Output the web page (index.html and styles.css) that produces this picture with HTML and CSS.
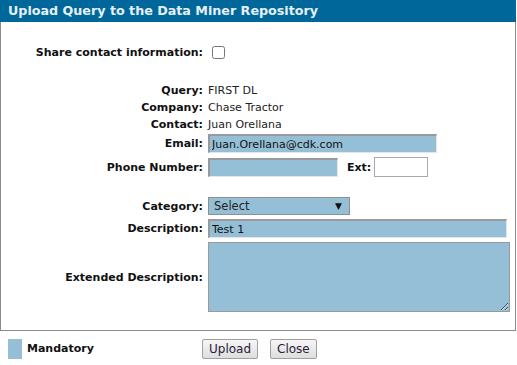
FILE: index.html
```html
<!DOCTYPE html>
<html lang="en">
<head>
    <meta charset="UTF-8">
    <title>Upload Query</title>
    <link rel="stylesheet" href="styles.css">
</head>
<body>
    <div class="dialog">
        <div class="title">Upload Query to the Data Miner Repository</div>

        <div class="form">
            <div class="row share-row">
                <label class="lbl">Share contact information:</label>
                <input type="checkbox" class="check">
            </div>

            <div class="row info first">
                <span class="lbl">Query:</span>
                <span class="val">FIRST DL</span>
            </div>
            <div class="row info">
                <span class="lbl">Company:</span>
                <span class="val">Chase Tractor</span>
            </div>
            <div class="row info">
                <span class="lbl">Contact:</span>
                <span class="val">Juan Orellana</span>
            </div>

            <div class="row field email-row">
                <label class="lbl">Email:</label>
                <input type="text" class="inp mand email" value="Juan.Orellana@cdk.com">
            </div>
            <div class="row field phone-row">
                <label class="lbl">Phone Number:</label>
                <input type="text" class="inp mand phone">
                <label class="ext-lbl">Ext:</label>
                <input type="text" class="ext">
            </div>

            <div class="row field cat-row">
                <label class="lbl">Category:</label>
                <div class="select">Select<span class="arrow">&#9660;</span></div>
            </div>
            <div class="row field desc-row">
                <label class="lbl">Description:</label>
                <input type="text" class="inp mand desc" value="Test 1">
            </div>
            <div class="row field ext-desc-row">
                <label class="lbl">Extended Description:</label>
                <textarea class="area"></textarea>
            </div>
        </div>
    </div>

    <div class="footer">
        <span class="swatch"></span>
        <span class="legend">Mandatory</span>
        <div class="buttons">
            <button class="btn">Upload</button>
            <button class="btn">Close</button>
        </div>
    </div>
</body>
</html>
```

FILE: styles.css
```css
body {
  margin: 0;
  font-family: "DejaVu Sans", Verdana, sans-serif;
  font-size: 11px;
  color: #111;
  background: #fff;
}

.dialog {
  width: 514px;
  height: 330px;
  border: 1px solid #8c8c8c;
  border-top: none;
  box-sizing: content-box;
}

.title {
  height: 22px;
  line-height: 22px;
  background-color: #00679b;
  color: #e6f0f7;
  font-weight: bold;
  font-size: 12.7px;
  padding-left: 8px;
  margin-left: -1px;
  margin-right: -1px;
}

.form {
  display: flex;
  flex-direction: column;
}

.row {
  display: flex;
  align-items: center;
}

.lbl {
  width: 205px;
  flex-shrink: 0;
  text-align: right;
  font-weight: bold;
  padding-right: 3px;
  box-sizing: border-box;
  color: #111;
}

.share-row {
  margin-top: 22px;
  height: 16px;
}

.check {
  margin: 0 0 0 6px;
  width: 13px;
  height: 13px;
}

.info {
  height: 17px;
}

.info.first {
  margin-top: 22px;
}

.val {
  color: #222;
  padding-left: 2px;
}

.field {
  margin-top: 3px;
}

.email-row {
  margin-top: 1px;
}

.inp {
  font-family: "DejaVu Sans", Verdana, sans-serif;
  font-size: 11px;
  color: #111;
  height: 19px;
  box-sizing: border-box;
  margin: 0 0 0 2px;
  padding: 0 2px;
  border-style: solid;
  border-width: 2px 1px 1px 2px;
  border-color: #9a9a9a #e6e6e6 #e6e6e6 #9a9a9a;
}

.mand {
  background-color: #95bfd6;
}

.email {
  width: 229px;
}

.phone {
  width: 130px;
}

.phone-row {
  margin-top: 4px;
}

.ext-lbl {
  font-weight: bold;
  margin-left: 9px;
  margin-right: 3px;
}

.ext {
  width: 54px;
  height: 20px;
  box-sizing: border-box;
  margin: 0;
  border: 1px solid #a9a9a9;
  background: #fff;
}

.cat-row {
  margin-top: 20px;
}

.select {
  margin-left: 2px;
  width: 142px;
  height: 18px;
  box-sizing: border-box;
  border: 1px solid #8f8f8f;
  background-color: #95bfd6;
  padding-left: 5px;
  line-height: 16px;
  font-size: 11.5px;
  color: #222;
  display: flex;
  justify-content: space-between;
}

.arrow {
  font-size: 9px;
  padding-right: 7px;
  color: #111;
}

.desc-row {
  margin-top: 4px;
}

.desc {
  width: 299px;
}

.ext-desc-row {
  margin-top: 4px;
}

.area {
  margin: 0 0 0 2px;
  width: 302px;
  height: 70px;
  box-sizing: border-box;
  border: 1px solid #9a9a9a;
  background-color: #95bfd6;
  resize: both;
}

.footer {
  display: flex;
  align-items: center;
  margin-top: 7px;
  padding-left: 8px;
  height: 21px;
}

.swatch {
  width: 14px;
  height: 20px;
  background-color: #95bfd6;
}

.legend {
  font-weight: bold;
  margin-left: 5px;
  width: 175px;
}

.buttons {
  display: flex;
  gap: 12px;
}

.btn {
  font-family: "DejaVu Sans", Verdana, sans-serif;
  font-size: 12px;
  color: #2b1a3a;
  height: 20px;
  padding: 0 6px;
  border: 1px solid #a0a0a0;
  border-radius: 2px;
  background: linear-gradient(#f6f6f6, #dedede);
}
```
